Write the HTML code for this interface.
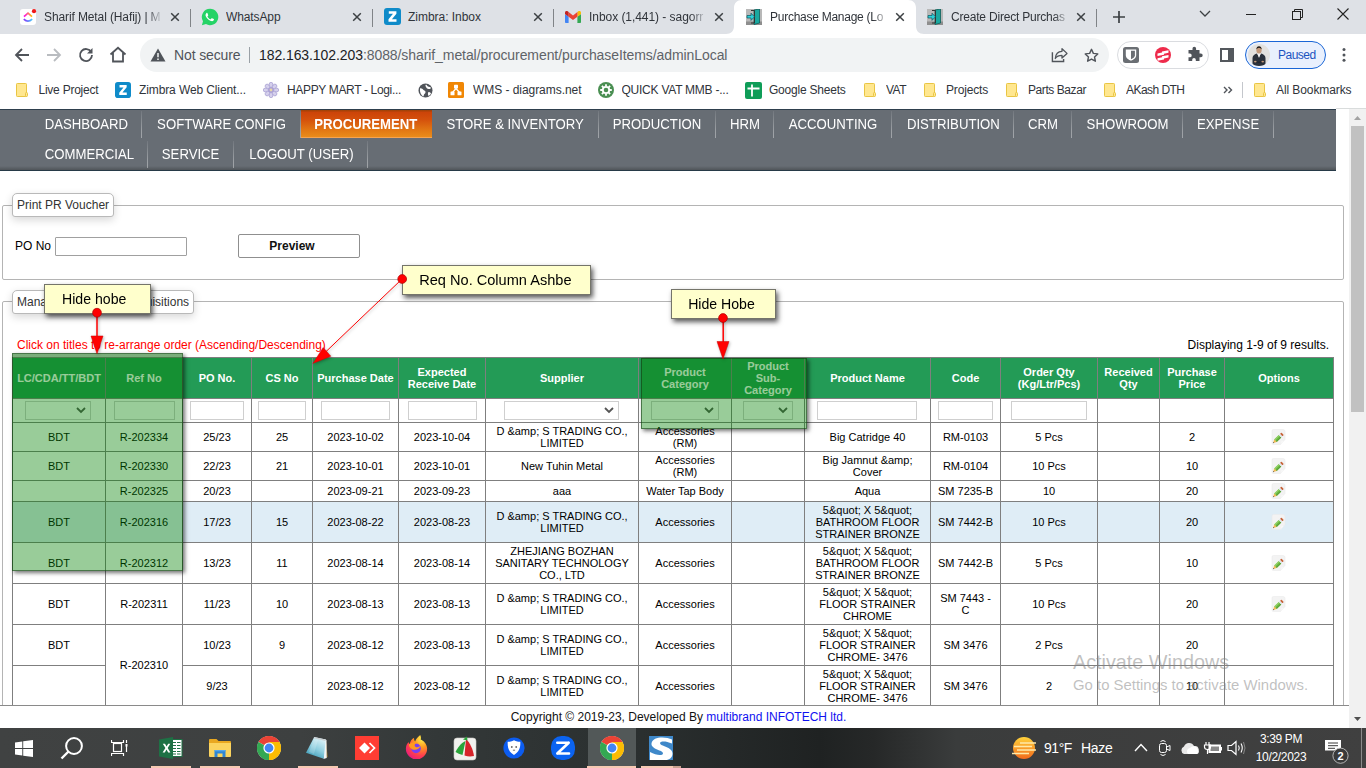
<!DOCTYPE html>
<html>
<head>
<meta charset="utf-8">
<title>Purchase Manage</title>
<style>
*{box-sizing:border-box;margin:0;padding:0}
html,body{width:1366px;height:768px;overflow:hidden;background:#fff;font-family:"Liberation Sans",sans-serif;}
body{position:relative}
.abs{position:absolute}
/* ---------- chrome ---------- */
#tabbar{position:absolute;left:0;top:0;width:1366px;height:34px;background:#dee1e6}
#toolbar{position:absolute;left:0;top:34px;width:1366px;height:41px;background:#fff}
#bookmarks{position:absolute;left:0;top:75px;width:1366px;height:33px;background:#fff}
.tab{position:absolute;top:0;height:34px;font-size:12px;color:#3c4043;white-space:nowrap}
.tab .t{position:absolute;top:10px;left:0;font-size:12.4px;color:#30343a;letter-spacing:-0.1px}
.tab .x{position:absolute;top:11px;width:10px;height:10px}
.sep{position:absolute;top:9px;width:1px;height:18px;background:#808387}
.bm{position:absolute;top:7px;font-size:12.4px;color:#30343a;white-space:nowrap;letter-spacing:-0.1px}
.folder{position:absolute;top:6px;width:12px;height:15px}
/* ---------- page ---------- */
#page{position:absolute;left:0;top:108px;width:1349px;height:620px;overflow:hidden;background:#fff}
#nav{position:absolute;left:0;top:1px;width:1336px;height:62px;background:linear-gradient(#676d74 0,#676d74 calc(100% - 4px),#50555a 100%);border-top:1px solid #2e3f4d;border-bottom:1px solid #273a48}
.mi{position:absolute;height:28px;font-size:14px;color:#fff;line-height:28px;white-space:nowrap;border-right:none;padding:0 14px;text-align:center}
.mi span{display:inline-block;transform:scaleX(.94);transform-origin:50% 50%}
.mi{padding:0 !important;overflow:visible}
.mi::after{content:"";position:absolute;right:0;top:1px;width:1px;height:27px;background:linear-gradient(rgba(255,255,255,.08),rgba(255,255,255,.34) 70%,rgba(255,255,255,.38))}
.mi.act::after{display:none}
.mi.act{background:linear-gradient(#9a4208 0,#cc4409 9%,#d4500c 35%,#e27814 75%,#e98c1a 100%);font-weight:bold;border-right:none;border-bottom:1px solid #f7a450;padding-right:2px !important}
fieldset{position:absolute;border:1px solid #b4b4b4;border-radius:2px}
.legend{position:absolute;height:24px;background:#fff;border:1px solid #b9b9b9;border-radius:5px 5px 3px 3px;font-size:12px;color:#333;line-height:22px;padding:0 4px;box-shadow:0 3px 9px rgba(0,0,0,.16);white-space:nowrap}
table{position:absolute;left:12px;top:249px;border-collapse:collapse;table-layout:fixed;width:1322px;font-size:11px;color:#000}
td,th{border:1px solid #7f7f7f;text-align:center;vertical-align:middle;padding:0;line-height:12px;overflow:hidden}
th{background:#239b56;color:#fff;font-weight:bold;font-size:11px}
tr.hl td{background:#dfedf6}
.fs{margin-right:2px}
.fi{display:inline-block;height:19px;border:1px solid #cfcfcf;background:#fff;vertical-align:middle;position:relative}
.fi svg{position:absolute;right:4px;top:5px}
.note span{display:inline-block}
.note{position:absolute;background:#ffffcc;border:1px solid #74746a;box-shadow:2px 3px 5px rgba(0,0,0,.65);font-size:15px;color:#000;text-align:center;white-space:nowrap}
.ov{position:absolute;background:rgba(0,128,0,.4);border:1px solid rgba(20,60,20,.6);box-shadow:2px 2px 4px rgba(0,0,0,.55)}
#footer{position:absolute;left:0;top:705px;width:1349px;height:23px;background:#fff;border-top:1px solid #8a8a8a;font-size:12px;line-height:23px;color:#111;text-align:center;padding-left:8px}
#footer span{color:#1010f0}
#vscroll{position:absolute;left:1349px;top:108px;width:17px;height:620px;background:#f1f1f1}
#taskbar{position:absolute;left:0;top:728px;width:1366px;height:40px;background:linear-gradient(90deg,#404242 0,#3d4040 22%,#333838 32%,#2a2f2f 47%,#1f2222 60%,#262828 64%,#3a3c3c 70%,#3c3d3d 76%,#404040 100%)}
.pn{position:relative;top:1px}
</style>
</head>
<body>
<div id="tabbar"><svg class="abs" style="left:20px;top:9px" width="17" height="16" viewBox="0 0 17 16"><defs><linearGradient id="cu1" x1="0" x2="1"><stop offset="0" stop-color="#ff02f0"/><stop offset="1" stop-color="#ffc800"/></linearGradient><linearGradient id="cu2" x1="0" x2="1"><stop offset="0" stop-color="#8930fd"/><stop offset="1" stop-color="#49ccf9"/></linearGradient></defs><rect width="16" height="16" rx="3" fill="#fff"/><path d="M4 7.6L8 4.2l4 3.4" fill="none" stroke="url(#cu1)" stroke-width="1.7"/><path d="M3.8 10.2q4.2 4 8.4 0" fill="none" stroke="url(#cu2)" stroke-width="1.7"/><circle cx="14" cy="2.2" r="2.1" fill="#f01818"/></svg><div class="abs" style="left:44px;top:9px;width:119px;height:16px;line-height:16px;font-size:12px;color:#30343a;white-space:nowrap;overflow:hidden;letter-spacing:-0.11px;-webkit-mask-image:linear-gradient(90deg,#000 calc(100% - 16px),transparent);mask-image:linear-gradient(90deg,#000 calc(100% - 16px),transparent)">Sharif Metal (Hafij) | M</div><svg class="abs" style="left:170px;top:12px" width="10" height="10" viewBox="0 0 10 10"><path d="M1.2 1.2l7.6 7.6M8.8 1.2l-7.6 7.6" stroke="#3c4043" stroke-width="1.5" fill="none"/></svg><div class="sep" style="left:190px"></div><svg class="abs" style="left:201px;top:8px" width="18" height="18" viewBox="0 0 18 18"><path d="M9 .8a8.2 8.2 0 0 0-7 12.4L.9 17.2l4.1-1.1A8.2 8.2 0 1 0 9 .8z" fill="#25d366"/><path d="M6.3 4.8c-.3 0-.7.1-1 .5-.4.5-.9 1.300-.7 2.500.3 1.600 2.400 4.300 5.400 5.200 1.300.4 2.200-.1 2.700-.8.300-.5.300-1 .2-1.100l-1.900-.9c-.2-.1-.4 0-.5.1l-.7.9c-.1.100-.3.200-.5.100-1-.4-2.300-1.500-2.800-2.600-.1-.2 0-.3.100-.4l.6-.7c.1-.1.100-.3 0-.5l-.7-1.800c-.1-.3-.2-.5-.5-.5z" fill="#fff"/></svg><div class="abs" style="left:226px;top:9px;width:100px;height:16px;line-height:16px;font-size:12px;color:#30343a;white-space:nowrap;overflow:hidden;letter-spacing:-0.11px">WhatsApp</div><svg class="abs" style="left:352px;top:12px" width="10" height="10" viewBox="0 0 10 10"><path d="M1.2 1.2l7.6 7.6M8.8 1.2l-7.6 7.6" stroke="#3c4043" stroke-width="1.5" fill="none"/></svg><div class="sep" style="left:372px"></div><svg class="abs" style="left:384px;top:8px" width="17" height="17" viewBox="0 0 17 17"><rect width="17" height="17" rx="3" fill="#0f8bc9"/><path d="M4.800 3.300h7.600v2.400L7.900 11.200h4.600v2.500H4.500v-2.400l4.500-5.500H4.800z" fill="#fff"/></svg><div class="abs" style="left:408px;top:9px;width:100px;height:16px;line-height:16px;font-size:12px;color:#30343a;white-space:nowrap;overflow:hidden;letter-spacing:-0.03px">Zimbra: Inbox</div><svg class="abs" style="left:533px;top:12px" width="10" height="10" viewBox="0 0 10 10"><path d="M1.2 1.2l7.6 7.6M8.8 1.2l-7.6 7.6" stroke="#3c4043" stroke-width="1.5" fill="none"/></svg><div class="sep" style="left:553px"></div><svg class="abs" style="left:565px;top:11px" width="16" height="12" viewBox="0 0 16 12"><path d="M0 1.500v9.400c0 .6.500 1.100 1.100 1.100h2.500V5.800L0 3z" fill="#4285f4"/><path d="M12.400 12h2.500c.6 0 1.100-.5 1.100-1.100V3l-3.600 2.800z" fill="#34a853"/><path d="M12.400 1.100v4.700L16 3V1.600C16 .2 14.500-.5 13.400.3z" fill="#fbbc04"/><path d="M3.600 5.800V1.100L8 4.400l4.400-3.300v4.700L8 9.100z" fill="#ea4335"/><path d="M0 1.600V3l3.600 2.800V1.100L2.600.3C1.500-.5 0 .2 0 1.600z" fill="#c5221f"/></svg><div class="abs" style="left:589px;top:9px;width:118px;height:16px;line-height:16px;font-size:12px;color:#30343a;white-space:nowrap;overflow:hidden;letter-spacing:-0.05px;-webkit-mask-image:linear-gradient(90deg,#000 calc(100% - 16px),transparent);mask-image:linear-gradient(90deg,#000 calc(100% - 16px),transparent)">Inbox (1,441) - sagorr</div><svg class="abs" style="left:714px;top:12px" width="10" height="10" viewBox="0 0 10 10"><path d="M1.2 1.2l7.6 7.6M8.8 1.2l-7.6 7.6" stroke="#3c4043" stroke-width="1.5" fill="none"/></svg><svg class="abs" style="left:726px;top:0" width="198" height="34" viewBox="0 0 198 34"><path d="M0 34c5 0 8-3 8-8V8c0-5 3-8 8-8h166c5 0 8 3 8 8v18c0 5 3 8 8 8z" fill="#fff"/></svg><svg class="abs" style="left:746px;top:9px" width="16" height="16" viewBox="0 0 16 16"><rect width="16" height="16" fill="#b8b8b8"/><rect x="0" y="12.500" width="16" height="3.500" fill="#8e8e8e"/><path d="M8 1l5.500-1v14L8 15.500z" fill="#1aa8a0" stroke="#0c5f5a" stroke-width=".8"/><path d="M5 1.500h3.500v12.500H5" fill="none" stroke="#333" stroke-width="1"/><path d="M1 6.500h4V4.200l3.500 3.600L5 11.400V9H1z" fill="#2fd0d8" stroke="#0a5560" stroke-width=".7"/></svg><div class="abs" style="left:770px;top:9px;width:119px;height:16px;line-height:16px;font-size:12px;color:#30343a;white-space:nowrap;overflow:hidden;letter-spacing:-0.26px;-webkit-mask-image:linear-gradient(90deg,#000 calc(100% - 16px),transparent);mask-image:linear-gradient(90deg,#000 calc(100% - 16px),transparent)">Purchase Manage (Lo</div><svg class="abs" style="left:895px;top:12px" width="10" height="10" viewBox="0 0 10 10"><path d="M1.2 1.2l7.6 7.6M8.8 1.2l-7.6 7.6" stroke="#3c4043" stroke-width="1.5" fill="none"/></svg><svg class="abs" style="left:927px;top:9px" width="16" height="16" viewBox="0 0 16 16"><rect width="16" height="16" fill="#b8b8b8"/><rect x="0" y="12.500" width="16" height="3.500" fill="#8e8e8e"/><path d="M8 1l5.500-1v14L8 15.500z" fill="#1aa8a0" stroke="#0c5f5a" stroke-width=".8"/><path d="M5 1.500h3.500v12.500H5" fill="none" stroke="#333" stroke-width="1"/><path d="M1 6.500h4V4.200l3.500 3.600L5 11.400V9H1z" fill="#2fd0d8" stroke="#0a5560" stroke-width=".7"/></svg><div class="abs" style="left:951px;top:9px;width:119px;height:16px;line-height:16px;font-size:12px;color:#30343a;white-space:nowrap;overflow:hidden;letter-spacing:-0.2px;-webkit-mask-image:linear-gradient(90deg,#000 calc(100% - 16px),transparent);mask-image:linear-gradient(90deg,#000 calc(100% - 16px),transparent)">Create Direct Purchas</div><svg class="abs" style="left:1076px;top:12px" width="10" height="10" viewBox="0 0 10 10"><path d="M1.2 1.2l7.6 7.6M8.8 1.2l-7.6 7.6" stroke="#3c4043" stroke-width="1.5" fill="none"/></svg><div class="sep" style="left:1096px"></div><svg class="abs" style="left:1112px;top:10px" width="14" height="14" viewBox="0 0 14 14"><path d="M7 1v12M1 7h12" stroke="#3c4043" stroke-width="1.700" fill="none"/></svg><svg class="abs" style="left:1199px;top:10px" width="12" height="8" viewBox="0 0 12 8"><path d="M1 1l5 5 5-5" stroke="#3c4043" stroke-width="1.300" fill="none"/></svg><div class="abs" style="left:1246px;top:14px;width:10px;height:1px;background:#222"></div><svg class="abs" style="left:1292px;top:9px" width="11" height="11" viewBox="0 0 11 11"><path d="M2.500 2.500V.5h8v8h-2" fill="none" stroke="#222" stroke-width="1"/><rect x=".5" y="2.500" width="8" height="8" fill="none" stroke="#222" stroke-width="1"/></svg><svg class="abs" style="left:1337px;top:8px" width="12" height="12" viewBox="0 0 12 12"><path d="M.5.5l11 11M11.500.5l-11 11" stroke="#222" stroke-width="1.100" fill="none"/></svg></div>
<div id="toolbar"><svg class="abs" style="left:14px;top:13px" width="16" height="16" viewBox="0 0 16 16"><path d="M15 8H2.500M8 2L2 8l6 6" fill="none" stroke="#50545a" stroke-width="1.800"/></svg><svg class="abs" style="left:46px;top:13px" width="16" height="16" viewBox="0 0 16 16"><path d="M1 8h12.500M8 2l6 6-6 6" fill="none" stroke="#b9bcc0" stroke-width="1.800"/></svg><svg class="abs" style="left:78px;top:13px" width="16" height="16" viewBox="0 0 16 16"><path d="M13.300 5.200A6 6 0 1 0 14 8" fill="none" stroke="#50545a" stroke-width="1.800"/><path d="M14.500 1v5.500H9z" fill="#50545a"/></svg><svg class="abs" style="left:109px;top:12px" width="18" height="17" viewBox="0 0 18 17"><path d="M1.500 8.500L9 1.800l7.500 6.700M4 7v8.500h10V7" fill="none" stroke="#50545a" stroke-width="1.800"/></svg><div class="abs" style="left:140px;top:4px;width:969px;height:34px;border-radius:17px;background:#f1f3f4"></div><svg class="abs" style="left:150px;top:14px" width="16" height="14" viewBox="0 0 16 14"><path d="M8 .5L15.500 13.500H.5z" fill="#50545a"/><path d="M8 5v4.200M8 10.500v1.600" stroke="#f1f3f4" stroke-width="1.500"/></svg><div class="abs" style="left:174px;top:12px;width:70px;height:18px;line-height:18px;font-size:14px;color:#50545a;white-space:nowrap;overflow:hidden;letter-spacing:-0.12px">Not secure</div><div class="abs" style="left:249px;top:13px;width:1px;height:16px;background:#9aa0a6"></div><div class="abs" style="left:259px;top:12px;height:18px;line-height:18px;font-size:14px;color:#5f6368;white-space:nowrap;letter-spacing:-0.08px"><span style="color:#202124">182.163.102.203</span>:8088/sharif_metal/procurement/purchaseItems/adminLocal</div><svg class="abs" style="left:1051px;top:12px" width="18" height="17" viewBox="0 0 18 17"><path d="M1.400 6.200V15.500H12.600V13" fill="none" stroke="#50545a" stroke-width="1.400"/><path d="M11 2.700L16 7.400 11 12V9.400C8 9.400 5.600 10.500 4.300 12.500 4.600 8.500 7 5.400 11 5.300z" fill="none" stroke="#50545a" stroke-width="1.300" stroke-linejoin="round"/></svg><svg class="abs" style="left:1084px;top:14px" width="15" height="15" viewBox="0 0 17 17"><path d="M8.500 1.500l2.100 4.600 5 .6-3.700 3.400 1 4.900-4.400-2.500L4.100 15l1-4.900L1.400 6.700l5-.6z" fill="none" stroke="#50545a" stroke-width="1.600" stroke-linejoin="round"/></svg><div class="abs" style="left:1117px;top:7px;width:92px;height:28px;border-radius:14px;background:#fff;border:1px solid #dadce0"></div><svg class="abs" style="left:1123px;top:13px" width="16" height="16" viewBox="0 0 16 16"><rect width="16" height="16" rx="2.500" fill="#6a6e73"/><path d="M2.800 2.500h10.400v5.800c0 2.800-2.800 4.600-5.200 5.500-2.400-.9-5.200-2.700-5.200-5.500z" fill="#fff"/><path d="M8 3.800h3.900v4.500c0 1.800-2 3.300-3.900 4z" fill="#6a6e73"/></svg><svg class="abs" style="left:1155px;top:13px" width="16" height="16" viewBox="0 0 16 16"><circle cx="8" cy="8" r="8" fill="#ee2b4b"/><path d="M2.500 6.500l4.500-1v-1l6.500-1.200v2.400l-4.500 1v1l-6.500 1.200zM2.500 11.300l4.500-1v-1l6.500-1.200v2.400l-4.500 1v1l-6.500 1.200z" fill="#fff"/></svg><svg class="abs" style="left:1186px;top:12px" width="17" height="17" viewBox="0 0 17 17"><path d="M6.500 2.500a1.800 1.800 0 0 1 3.600 0V4h3.400v3.400h1.300a1.900 1.900 0 0 1 0 3.800h-1.300V15H9.800v-1.300a1.800 1.800 0 0 0-3.600 0V15H2.500v-3.700h1.300a1.900 1.900 0 0 0 0-3.800H2.500V4h4z" fill="#50545a"/></svg><div class="abs" style="left:1220px;top:14px;width:14px;height:14px;border:2px solid #54585d;border-right-width:6px"></div><div class="abs" style="left:1245px;top:7px;width:81px;height:28px;border-radius:14px;background:#e9f0fd;border:1.500px solid #1a66d6"></div><svg class="abs" style="left:1248px;top:10px" width="22" height="22" viewBox="0 0 22 22"><defs><clipPath id="av"><circle cx="11" cy="11" r="11"/></clipPath></defs><g clip-path="url(#av)"><rect width="22" height="22" fill="#e3e1de"/><path d="M4.500 22v-8c0-2.500 2.500-4 4.500-4.500L11 13l2-3.500c2 .5 4.500 2 4.500 4.500v8z" fill="#2b313b"/><path d="M9.300 9.500L11 14l1.700-4.500z" fill="#f4f4f4"/><ellipse cx="11" cy="6.200" rx="2.600" ry="3.200" fill="#c49a7c"/><path d="M8.300 5.600q.3-3.300 2.700-3.300t2.700 3.300q-1-1.800-2.700-1.800t-2.700 1.800z" fill="#1e1a18"/><path d="M6.500 16.500q4.500 2 9 0v1.800q-4.500 1.500-9 0z" fill="#232830"/><ellipse cx="7.300" cy="17.600" rx="1.300" ry=".9" fill="#c49a7c"/><ellipse cx="14.700" cy="17.600" rx="1.300" ry=".9" fill="#c49a7c"/></g></svg><div class="abs" style="left:1278px;top:12px;width:45px;height:18px;line-height:18px;font-size:12.5px;color:#1a53c0;white-space:nowrap;overflow:hidden;letter-spacing:-0.5px;font-size:12px">Paused</div><svg class="abs" style="left:1342px;top:12px" width="4" height="18" viewBox="0 0 4 18"><circle cx="2" cy="3.600" r="1.500" fill="#50545a"/><circle cx="2" cy="8.900" r="1.500" fill="#50545a"/><circle cx="2" cy="14.200" r="1.500" fill="#50545a"/></svg></div>
<div id="bookmarks"><svg class="abs" style="left:16px;top:8px" width="13" height="15" viewBox="0 0 13 15"><rect x=".5" y=".5" width="10" height="13" rx=".8" fill="#ffe790" stroke="#e9c543"/><rect x="9.500" y="9.500" width="2" height="4" rx="1" fill="#ffe790" stroke="#e9c543"/></svg><div class="abs" style="left:38.5px;top:6px;width:70px;height:18px;line-height:18px;font-size:12px;color:#30343a;white-space:nowrap;overflow:hidden;letter-spacing:-0.24px">Live Project</div><svg class="abs" style="left:115px;top:7px" width="16" height="16" viewBox="0 0 17 17"><rect width="17" height="17" rx="3" fill="#0f8bc9"/><path d="M4.800 3.300h7.600v2.400L7.900 11.200h4.600v2.500H4.500v-2.400l4.500-5.500H4.800z" fill="#fff"/></svg><div class="abs" style="left:139px;top:6px;width:112px;height:18px;line-height:18px;font-size:12px;color:#30343a;white-space:nowrap;overflow:hidden;letter-spacing:-0.11px">Zimbra Web Client...</div><svg class="abs" style="left:263px;top:7px" width="16" height="16" viewBox="0 0 16 16"><g fill="#d5d0ec" stroke="#a39bd0" stroke-width=".7"><ellipse cx="8" cy="3" rx="2" ry="2.800"/><ellipse cx="8" cy="13" rx="2" ry="2.800"/><ellipse cx="3" cy="8" rx="2.800" ry="2"/><ellipse cx="13" cy="8" rx="2.800" ry="2"/><ellipse cx="4.500" cy="4.500" rx="2" ry="2.600" transform="rotate(-45 4.500 4.500)"/><ellipse cx="11.500" cy="4.500" rx="2" ry="2.600" transform="rotate(45 11.500 4.500)"/><ellipse cx="4.500" cy="11.500" rx="2" ry="2.600" transform="rotate(45 4.500 11.500)"/><ellipse cx="11.500" cy="11.500" rx="2" ry="2.600" transform="rotate(-45 11.500 11.500)"/></g><circle cx="8" cy="8" r="2.800" fill="#aaa0d6"/><circle cx="8" cy="8" r="1.400" fill="#e6d8a8"/></svg><div class="abs" style="left:287px;top:6px;width:120px;height:18px;line-height:18px;font-size:12px;color:#30343a;white-space:nowrap;overflow:hidden;letter-spacing:-0.34px">HAPPY MART - Logi...</div><svg class="abs" style="left:418px;top:8px" width="15" height="15" viewBox="0 0 15 15"><circle cx="7.500" cy="7.500" r="7" fill="#50545a"/><path d="M2 5.500c1.500-.5 2.500.5 3.500 1.500s2 .5 2 2-1 1.500-1.500 2.500 0 2-1 2C3 12 1.500 9 2 5.500zM8 1.500c1 .5 1 1.500 2 2s2.500 0 3 1.500c-.5 1-1.500 1-2.500 1S8.500 5 8 4s-1-1.500 0-2.500zM10.500 9c1 0 2 .5 2.500 1.500-.5 1-1.500 2-2.500 2.500-.5-1-1-3 0-4z" fill="#fff"/></svg><svg class="abs" style="left:448px;top:7px" width="16" height="16" viewBox="0 0 16 16"><rect width="16" height="16" rx="1.500" fill="#f08705"/><path d="M8 6.500L4.500 10.500M8 6.500l3.500 4" stroke="#fff" stroke-width="1.200"/><rect x="6" y="2.800" width="4" height="3.800" rx=".6" fill="#fff"/><rect x="2.500" y="9.500" width="4" height="3.800" rx=".6" fill="#fff"/><rect x="9.500" y="9.500" width="4" height="3.800" rx=".6" fill="#fff"/></svg><div class="abs" style="left:473px;top:6px;width:112px;height:18px;line-height:18px;font-size:12px;color:#30343a;white-space:nowrap;overflow:hidden;letter-spacing:-0.05px">WMS - diagrams.net</div><svg class="abs" style="left:598px;top:7px" width="16" height="16" viewBox="0 0 16 16"><circle cx="8" cy="8" r="8" fill="#4a8f52"/><circle cx="8" cy="8" r="3.200" fill="none" stroke="#fff" stroke-width="1.800"/><g stroke="#fff" stroke-width="1.800"><path d="M8 2.200v2M8 11.800v2M2.200 8h2M11.800 8h2M3.900 3.900l1.400 1.400M10.700 10.700l1.400 1.400M3.900 12.100l1.400-1.400M10.700 5.300l1.400-1.400"/></g></svg><div class="abs" style="left:621.5px;top:6px;width:110px;height:18px;line-height:18px;font-size:12px;color:#30343a;white-space:nowrap;overflow:hidden;letter-spacing:-0.24px">QUICK VAT MMB -...</div><svg class="abs" style="left:745px;top:7px" width="17" height="17" viewBox="0 0 17 17"><rect width="17" height="17" rx="2" fill="#0f9d58"/><path d="M2.500 6.500h12M7 2.500v12" stroke="#fff" stroke-width="1.800"/></svg><div class="abs" style="left:769px;top:6px;width:80px;height:18px;line-height:18px;font-size:12px;color:#30343a;white-space:nowrap;overflow:hidden;letter-spacing:-0.22px">Google Sheets</div><svg class="abs" style="left:864px;top:8px" width="13" height="15" viewBox="0 0 13 15"><rect x=".5" y=".5" width="10" height="13" rx=".8" fill="#ffe790" stroke="#e9c543"/><rect x="9.500" y="9.500" width="2" height="4" rx="1" fill="#ffe790" stroke="#e9c543"/></svg><div class="abs" style="left:886px;top:6px;width:24px;height:18px;line-height:18px;font-size:12px;color:#30343a;white-space:nowrap;overflow:hidden;letter-spacing:-0.5px">VAT</div><svg class="abs" style="left:924px;top:8px" width="13" height="15" viewBox="0 0 13 15"><rect x=".5" y=".5" width="10" height="13" rx=".8" fill="#ffe790" stroke="#e9c543"/><rect x="9.500" y="9.500" width="2" height="4" rx="1" fill="#ffe790" stroke="#e9c543"/></svg><div class="abs" style="left:946px;top:6px;width:46px;height:18px;line-height:18px;font-size:12px;color:#30343a;white-space:nowrap;overflow:hidden;letter-spacing:-0.17px">Projects</div><svg class="abs" style="left:1006px;top:8px" width="13" height="15" viewBox="0 0 13 15"><rect x=".5" y=".5" width="10" height="13" rx=".8" fill="#ffe790" stroke="#e9c543"/><rect x="9.500" y="9.500" width="2" height="4" rx="1" fill="#ffe790" stroke="#e9c543"/></svg><div class="abs" style="left:1028px;top:6px;width:62px;height:18px;line-height:18px;font-size:12px;color:#30343a;white-space:nowrap;overflow:hidden;letter-spacing:-0.43px">Parts Bazar</div><svg class="abs" style="left:1104px;top:8px" width="13" height="15" viewBox="0 0 13 15"><rect x=".5" y=".5" width="10" height="13" rx=".8" fill="#ffe790" stroke="#e9c543"/><rect x="9.500" y="9.500" width="2" height="4" rx="1" fill="#ffe790" stroke="#e9c543"/></svg><div class="abs" style="left:1126px;top:6px;width:62px;height:18px;line-height:18px;font-size:12px;color:#30343a;white-space:nowrap;overflow:hidden;letter-spacing:-0.54px">AKash DTH</div><svg class="abs" style="left:1223px;top:11px" width="10" height="8" viewBox="0 0 10 8"><path d="M1 1l3 3-3 3M5.500 1l3 3-3 3" fill="none" stroke="#50545a" stroke-width="1.400"/></svg><div class="abs" style="left:1242px;top:7px;width:1px;height:16px;background:#c4c7cc"></div><svg class="abs" style="left:1254px;top:8px" width="13" height="15" viewBox="0 0 13 15"><rect x=".5" y=".5" width="10" height="13" rx=".8" fill="#ffe790" stroke="#e9c543"/><rect x="9.500" y="9.500" width="2" height="4" rx="1" fill="#ffe790" stroke="#e9c543"/></svg><div class="abs" style="left:1276px;top:6px;width:80px;height:18px;line-height:18px;font-size:12px;color:#30343a;white-space:nowrap;overflow:hidden;letter-spacing:-0.09px">All Bookmarks</div></div>
<div id="page">
 <div id="nav">
<div class="mi" style="left:31px;top:0px;width:111px"><span>DASHBOARD</span></div>
<div class="mi" style="left:142px;top:0px;width:159px"><span>SOFTWARE CONFIG</span></div>
<div class="mi act" style="left:301px;top:0px;width:131px"><span>PROCUREMENT</span></div>
<div class="mi" style="left:432px;top:0px;width:167px"><span>STORE &amp; INVENTORY</span></div>
<div class="mi" style="left:599px;top:0px;width:117px"><span>PRODUCTION</span></div>
<div class="mi" style="left:716px;top:0px;width:58px"><span>HRM</span></div>
<div class="mi" style="left:774px;top:0px;width:118px"><span>ACCOUNTING</span></div>
<div class="mi" style="left:892px;top:0px;width:122px"><span>DISTRIBUTION</span></div>
<div class="mi" style="left:1014px;top:0px;width:58px"><span>CRM</span></div>
<div class="mi" style="left:1072px;top:0px;width:111px"><span>SHOWROOM</span></div>
<div class="mi" style="left:1183px;top:0px;width:91px"><span>EXPENSE</span></div>
<div class="mi" style="left:31px;top:30px;width:117px"><span>COMMERCIAL</span></div>
<div class="mi" style="left:148px;top:30px;width:86px"><span>SERVICE</span></div>
<div class="mi" style="left:234px;top:30px;width:134px"><span>LOGOUT (USER)</span></div>
</div>
 <fieldset style="left:2px;top:97px;width:1342px;height:75px"></fieldset>
 <div class="legend" style="left:12px;top:85px;width:102px">Print PR Voucher</div>
 <div class="abs" style="left:15px;top:131px;font-size:12px;color:#000">PO No</div>
 <div class="abs" style="left:55px;top:129px;width:132px;height:19px;border:1px solid #a0a0a0;border-radius:1px;background:#fff"></div>
 <div class="abs" style="left:238px;top:126px;width:122px;height:24px;border:1px solid #8f8f8f;border-radius:2px;background:#fff;font-size:12px;font-weight:bold;text-align:center;line-height:22px;color:#111;padding-right:14px">Preview</div>
 <fieldset style="left:2px;top:193px;width:1342px;height:500px"></fieldset>
 <div class="legend" style="left:12px;top:182px;width:182px">Manage Purchase <span style="margin-left:6px">Requisitions</span></div>
 <div class="abs" style="left:17px;top:230px;font-size:12px;color:#f00;white-space:nowrap">Click on titles to re-arrange order (Ascending/Descending)</div>
 <div class="abs" style="left:1100px;top:230px;width:1229px;font-size:12px;color:#000;white-space:nowrap;text-align:right;width:229px">Displaying 1-9 of 9 results.</div>
<table>
<colgroup><col style="width:93px"><col style="width:77px"><col style="width:69px"><col style="width:61px"><col style="width:86px"><col style="width:87px"><col style="width:153px"><col style="width:93px"><col style="width:73px"><col style="width:126px"><col style="width:70px"><col style="width:97px"><col style="width:62px"><col style="width:65px"><col style="width:109px"></colgroup>
<tr style="height:41px"><th>LC/CDA/TT/BDT</th><th>Ref No</th><th>PO No.</th><th>CS No</th><th>Purchase Date</th><th>Expected<br>Receive Date</th><th>Supplier</th><th>Product<br>Category</th><th>Product<br>Sub-<br>Category</th><th>Product Name</th><th>Code</th><th>Order Qty<br>(Kg/Ltr/Pcs)</th><th>Received<br>Qty</th><th>Purchase<br>Price</th><th>Options</th></tr>
<tr style="height:24px"><td><span class="fi fs" style="width:66px"><svg width="10" height="7" viewBox="0 0 10 7"><path d="M1 1l4 4 4-4" fill="none" stroke="#555" stroke-width="1.8"/></svg></span></td><td><span class="fi" style="width:61px"></span></td><td><span class="fi" style="width:54px;margin-right:1px"></span></td><td><span class="fi" style="width:48px"></span></td><td><span class="fi" style="width:69px"></span></td><td><span class="fi" style="width:69px"></span></td><td><span class="fi fs" style="width:115px"><svg width="10" height="7" viewBox="0 0 10 7"><path d="M1 1l4 4 4-4" fill="none" stroke="#555" stroke-width="1.8"/></svg></span></td><td><span class="fi" style="width:68px"><svg width="10" height="7" viewBox="0 0 10 7"><path d="M1 1l4 4 4-4" fill="none" stroke="#555" stroke-width="1.8"/></svg></span></td><td><span class="fi" style="width:50px"><svg width="10" height="7" viewBox="0 0 10 7"><path d="M1 1l4 4 4-4" fill="none" stroke="#555" stroke-width="1.8"/></svg></span></td><td><span class="fi fs" style="width:100px"></span></td><td><span class="fi" style="width:55px"></span></td><td><span class="fi" style="width:76px"></span></td><td></td><td></td><td></td></tr>
<tr style="height:29px"><td>BDT</td><td>R-202334</td><td>25/23</td><td>25</td><td>2023-10-02</td><td>2023-10-04</td><td>D &amp;amp; S TRADING CO.,<br>LIMITED</td><td>Accessories<br>(RM)</td><td></td><td>Big Catridge 40</td><td>RM-0103</td><td>5 Pcs</td><td></td><td>2</td><td><svg class="pn" width="16" height="16" viewBox="0 0 16 16"><path d="M2.500 0.500h9.500q2 0 2 2v8l-4.500 5h-7q-1.500 0-1.500-1.500v-12q0-1.500 1.500-1.500z" fill="#f3f3f3" stroke="#ebebeb" stroke-width=".6"/><path d="M14 10.500l-4.500 5q1.500-.5 1-3 2.500.5 3.500-2z" fill="#fdfdfd"/><g transform="translate(.3 .6) rotate(-45 8 8) scale(.93)" opacity=".92"><rect x="3.200" y="6.200" width="7" height="3.800" fill="#63b534"/><rect x="3.200" y="6.200" width="7" height="1.300" fill="#8ed160"/><rect x="3.200" y="8.900" width="7" height="1.100" fill="#4a9c26"/><rect x="10.200" y="6.200" width="1.900" height="3.800" fill="#dde4ea"/><rect x="12.100" y="6.200" width="2" height="3.800" rx=".8" fill="#c4572a"/><path d="M3.200 6.200L-0.200 8.100l3.400 1.900z" fill="#f5b544"/><path d="M0.900 7.450L-0.500 8.100l1.400.65z" fill="#333"/></g></svg></td></tr>
<tr style="height:29px"><td>BDT</td><td>R-202330</td><td>22/23</td><td>21</td><td>2023-10-01</td><td>2023-10-01</td><td>New Tuhin Metal</td><td>Accessories<br>(RM)</td><td></td><td>Big Jamnut &amp;amp;<br>Cover</td><td>RM-0104</td><td>10 Pcs</td><td></td><td>10</td><td><svg class="pn" width="16" height="16" viewBox="0 0 16 16"><path d="M2.500 0.500h9.500q2 0 2 2v8l-4.500 5h-7q-1.500 0-1.500-1.500v-12q0-1.500 1.500-1.500z" fill="#f3f3f3" stroke="#ebebeb" stroke-width=".6"/><path d="M14 10.500l-4.500 5q1.500-.5 1-3 2.500.5 3.500-2z" fill="#fdfdfd"/><g transform="translate(.3 .6) rotate(-45 8 8) scale(.93)" opacity=".92"><rect x="3.200" y="6.200" width="7" height="3.800" fill="#63b534"/><rect x="3.200" y="6.200" width="7" height="1.300" fill="#8ed160"/><rect x="3.200" y="8.900" width="7" height="1.100" fill="#4a9c26"/><rect x="10.200" y="6.200" width="1.900" height="3.800" fill="#dde4ea"/><rect x="12.100" y="6.200" width="2" height="3.800" rx=".8" fill="#c4572a"/><path d="M3.200 6.200L-0.200 8.100l3.400 1.900z" fill="#f5b544"/><path d="M0.900 7.450L-0.500 8.100l1.400.65z" fill="#333"/></g></svg></td></tr>
<tr style="height:21px"><td></td><td>R-202325</td><td>20/23</td><td></td><td>2023-09-21</td><td>2023-09-23</td><td>aaa</td><td>Water Tap Body</td><td></td><td>Aqua</td><td>SM 7235-B</td><td>10</td><td></td><td>20</td><td><svg class="pn" width="16" height="16" viewBox="0 0 16 16"><path d="M2.500 0.500h9.500q2 0 2 2v8l-4.500 5h-7q-1.500 0-1.500-1.500v-12q0-1.500 1.500-1.500z" fill="#f3f3f3" stroke="#ebebeb" stroke-width=".6"/><path d="M14 10.500l-4.500 5q1.500-.5 1-3 2.500.5 3.500-2z" fill="#fdfdfd"/><g transform="translate(.3 .6) rotate(-45 8 8) scale(.93)" opacity=".92"><rect x="3.200" y="6.200" width="7" height="3.800" fill="#63b534"/><rect x="3.200" y="6.200" width="7" height="1.300" fill="#8ed160"/><rect x="3.200" y="8.900" width="7" height="1.100" fill="#4a9c26"/><rect x="10.200" y="6.200" width="1.900" height="3.800" fill="#dde4ea"/><rect x="12.100" y="6.200" width="2" height="3.800" rx=".8" fill="#c4572a"/><path d="M3.200 6.200L-0.200 8.100l3.400 1.900z" fill="#f5b544"/><path d="M0.900 7.450L-0.500 8.100l1.400.65z" fill="#333"/></g></svg></td></tr>
<tr style="height:41px" class="hl"><td>BDT</td><td>R-202316</td><td>17/23</td><td>15</td><td>2023-08-22</td><td>2023-08-23</td><td>D &amp;amp; S TRADING CO.,<br>LIMITED</td><td>Accessories</td><td></td><td>5&amp;quot; X 5&amp;quot;<br>BATHROOM FLOOR<br>STRAINER BRONZE</td><td>SM 7442-B</td><td>10 Pcs</td><td></td><td>20</td><td><svg class="pn" width="16" height="16" viewBox="0 0 16 16"><path d="M2.500 0.500h9.500q2 0 2 2v8l-4.500 5h-7q-1.500 0-1.500-1.500v-12q0-1.500 1.500-1.500z" fill="#f3f3f3" stroke="#ebebeb" stroke-width=".6"/><path d="M14 10.500l-4.500 5q1.500-.5 1-3 2.500.5 3.500-2z" fill="#fdfdfd"/><g transform="translate(.3 .6) rotate(-45 8 8) scale(.93)" opacity=".92"><rect x="3.200" y="6.200" width="7" height="3.800" fill="#63b534"/><rect x="3.200" y="6.200" width="7" height="1.300" fill="#8ed160"/><rect x="3.200" y="8.900" width="7" height="1.100" fill="#4a9c26"/><rect x="10.200" y="6.200" width="1.900" height="3.800" fill="#dde4ea"/><rect x="12.100" y="6.200" width="2" height="3.800" rx=".8" fill="#c4572a"/><path d="M3.200 6.200L-0.200 8.100l3.400 1.900z" fill="#f5b544"/><path d="M0.900 7.450L-0.500 8.100l1.400.65z" fill="#333"/></g></svg></td></tr>
<tr style="height:41px"><td>BDT</td><td>R-202312</td><td>13/23</td><td>11</td><td>2023-08-14</td><td>2023-08-14</td><td>ZHEJIANG BOZHAN<br>SANITARY TECHNOLOGY<br>CO., LTD</td><td>Accessories</td><td></td><td>5&amp;quot; X 5&amp;quot;<br>BATHROOM FLOOR<br>STRAINER BRONZE</td><td>SM 7442-B</td><td>5 Pcs</td><td></td><td>10</td><td><svg class="pn" width="16" height="16" viewBox="0 0 16 16"><path d="M2.500 0.500h9.500q2 0 2 2v8l-4.500 5h-7q-1.500 0-1.500-1.500v-12q0-1.500 1.500-1.500z" fill="#f3f3f3" stroke="#ebebeb" stroke-width=".6"/><path d="M14 10.500l-4.500 5q1.500-.5 1-3 2.500.5 3.500-2z" fill="#fdfdfd"/><g transform="translate(.3 .6) rotate(-45 8 8) scale(.93)" opacity=".92"><rect x="3.200" y="6.200" width="7" height="3.800" fill="#63b534"/><rect x="3.200" y="6.200" width="7" height="1.300" fill="#8ed160"/><rect x="3.200" y="8.900" width="7" height="1.100" fill="#4a9c26"/><rect x="10.200" y="6.200" width="1.900" height="3.800" fill="#dde4ea"/><rect x="12.100" y="6.200" width="2" height="3.800" rx=".8" fill="#c4572a"/><path d="M3.200 6.200L-0.200 8.100l3.400 1.900z" fill="#f5b544"/><path d="M0.900 7.450L-0.500 8.100l1.400.65z" fill="#333"/></g></svg></td></tr>
<tr style="height:41px"><td>BDT</td><td>R-202311</td><td>11/23</td><td>10</td><td>2023-08-13</td><td>2023-08-13</td><td>D &amp;amp; S TRADING CO.,<br>LIMITED</td><td>Accessories</td><td></td><td>5&amp;quot; X 5&amp;quot;<br>FLOOR STRAINER<br>CHROME</td><td>SM 7443 -<br>C</td><td>10 Pcs</td><td></td><td>20</td><td><svg class="pn" width="16" height="16" viewBox="0 0 16 16"><path d="M2.500 0.500h9.500q2 0 2 2v8l-4.500 5h-7q-1.500 0-1.500-1.500v-12q0-1.500 1.500-1.500z" fill="#f3f3f3" stroke="#ebebeb" stroke-width=".6"/><path d="M14 10.500l-4.500 5q1.500-.5 1-3 2.500.5 3.500-2z" fill="#fdfdfd"/><g transform="translate(.3 .6) rotate(-45 8 8) scale(.93)" opacity=".92"><rect x="3.200" y="6.200" width="7" height="3.800" fill="#63b534"/><rect x="3.200" y="6.200" width="7" height="1.300" fill="#8ed160"/><rect x="3.200" y="8.900" width="7" height="1.100" fill="#4a9c26"/><rect x="10.200" y="6.200" width="1.900" height="3.800" fill="#dde4ea"/><rect x="12.100" y="6.200" width="2" height="3.800" rx=".8" fill="#c4572a"/><path d="M3.200 6.200L-0.200 8.100l3.400 1.900z" fill="#f5b544"/><path d="M0.900 7.450L-0.500 8.100l1.400.65z" fill="#333"/></g></svg></td></tr>
<tr style="height:41px"><td>BDT</td><td rowspan="2" style="padding-bottom:2px">R-202310</td><td>10/23</td><td>9</td><td>2023-08-12</td><td>2023-08-13</td><td>D &amp;amp; S TRADING CO.,<br>LIMITED</td><td>Accessories</td><td></td><td>5&amp;quot; X 5&amp;quot;<br>FLOOR STRAINER<br>CHROME- 3476</td><td>SM 3476</td><td>2 Pcs</td><td></td><td>20</td><td></td></tr>
<tr style="height:41px"><td></td><td>9/23</td><td></td><td>2023-08-12</td><td>2023-08-12</td><td>D &amp;amp; S TRADING CO.,<br>LIMITED</td><td>Accessories</td><td></td><td>5&amp;quot; X 5&amp;quot;<br>FLOOR STRAINER<br>CHROME- 3476</td><td>SM 3476</td><td>2</td><td></td><td>10</td><td></td></tr>
</table>
</div>

<div class="ov" style="left:12px;top:353px;width:171px;height:218px;background:linear-gradient(rgba(0,50,0,.2),rgba(0,50,0,.2)) top/100% 3px no-repeat,rgba(0,128,0,.4)"></div>
<div class="ov" style="left:641px;top:358px;width:166px;height:71px"></div>
<svg class="abs" style="left:0;top:0;pointer-events:none;filter:drop-shadow(1.5px 1.5px 1.5px rgba(0,0,0,.3))" width="1366" height="768">
 <g stroke="#f00" stroke-width="1" fill="#f00">
  <line x1="97" y1="313" x2="97" y2="340" stroke-width="1.500"/><path d="M91 336h12L97 353.7z" stroke="#c00" stroke-width=".5"/>
  <line x1="723.200" y1="318" x2="723.200" y2="345" stroke-width="1.500"/><path d="M717 341.500h12L723 359z" stroke="#c00" stroke-width=".5"/>
  <line x1="402" y1="279" x2="324" y2="353.500" stroke-width="1"/><path d="M312.900 363.400L323.200 347.600 330.800 356.200z" stroke="#c00" stroke-width=".5"/>
 </g>
</svg>
<div class="note" style="left:44px;top:284px;width:107px;height:30px;line-height:28px;padding-right:7px"><span style="transform:scaleX(.94)">Hide hobe</span></div>
<div class="note" style="left:402px;top:265px;width:189px;height:30px;line-height:27px;padding-right:2px"><span style="transform:scaleX(.972)">Req No. Column Ashbe</span></div>
<div class="note" style="left:671px;top:289px;width:105px;height:30px;line-height:28px;padding-right:5px"><span style="transform:scaleX(.94)">Hide Hobe</span></div>
<svg class="abs" style="left:0;top:0;pointer-events:none" width="1366" height="768">
 <g fill="#f00" stroke="#b00000" stroke-width=".7"><circle cx="97" cy="312.700" r="4.400"/><circle cx="723" cy="318" r="4.400"/><circle cx="402.200" cy="279" r="4.400"/></g>
</svg>
<div class="abs" style="left:1073px;top:650px;font-size:19.800px;line-height:24px;color:rgba(130,130,130,.5);white-space:nowrap">Activate Windows</div><div class="abs" style="left:1073px;top:676px;font-size:14.900px;line-height:18px;color:rgba(130,130,130,.5);white-space:nowrap">Go to Settings to activate Windows.</div><div class="abs" style="left:1336px;top:108px;width:30px;height:1px;background:#d9dcdc;z-index:5"></div>
<div id="vscroll"><svg class="abs" style="left:5px;top:8px" width="7" height="4" viewBox="0 0 7 4"><path d="M0 4L3.500 0 7 4z" fill="#a3a3a3"/></svg><div class="abs" style="left:2px;top:18px;width:13px;height:286px;background:#c1c1c1"></div><svg class="abs" style="left:5px;top:609px" width="7" height="4" viewBox="0 0 7 4"><path d="M0 0L3.500 4 7 0z" fill="#505050"/></svg></div>
<div id="footer">Copyright © 2019-23, Developed By <span>multibrand INFOTECH ltd.</span></div>
<div id="taskbar"><svg class="abs" style="left:15px;top:12px" width="18" height="17" viewBox="0 0 18 17"><path d="M0 2.400L7.300 1.400V8H0zM8.200 1.300L18 0V8H8.200zM0 8.900H7.300V15.600L0 14.600zM8.200 8.900H18V17L8.200 15.700z" fill="#fff"/></svg><svg class="abs" style="left:60px;top:8px" width="24" height="24" viewBox="0 0 24 24"><circle cx="14" cy="10" r="7.900" fill="none" stroke="#fff" stroke-width="2"/><path d="M8.500 15.500L1.500 22.500" stroke="#fff" stroke-width="2.400"/></svg><svg class="abs" style="left:111px;top:11px" width="18" height="18" viewBox="0 0 18 18"><g fill="none" stroke="#fff" stroke-width="1.200"><rect x="2.500" y="4.500" width="8" height="8"/><path d="M.5 1v2.500h12V1M.5 17v-2.500h12V17M15.500 1v3M15.500 7v6"/></g><rect x="14.500" y="5" width="2" height="2.500" fill="#fff"/></svg><svg class="abs" style="left:159px;top:9px" width="24" height="22" viewBox="0 0 24 22"><rect x="10" y="2.500" width="13" height="17" fill="#fff" stroke="#1e7145" stroke-width="1"/><g stroke="#1e7145" stroke-width="1"><path d="M14 5.500h3M18 5.500h3.500M14 8.500h3M18 8.500h3.500M14 11.500h3M18 11.500h3.500M14 14.500h3M18 14.500h3.500M14 17h3M18 17h3.500"/></g><path d="M0 2.500L14 0v22L0 19.500z" fill="#1e7145"/><path d="M3.800 6.800l2.600 4.200-2.800 4.400h2.200l1.700-3 1.700 3h2.200L8.700 11l2.600-4.200H9.200L7.600 9.600 6 6.800z" fill="#fff"/></svg><div class="abs" style="left:151px;top:38px;width:40px;height:2px;background:#f6c9b2"></div><svg class="abs" style="left:209px;top:9px" width="22" height="21" viewBox="0 0 22 21"><path d="M0 3q0-1 1-1h6.500l2 2H21q1 0 1 1v13H0z" fill="#e9a820"/><path d="M0 6h22v13q0 1-1 1H1q-1 0-1-1z" fill="#fbd45f"/><path d="M5.500 13h11v7h-3v-3.500h-5V20h-3z" fill="#2f86d6"/><path d="M5.500 13h11v1.300h-11z" fill="#56a7ec"/></svg><div class="abs" style="left:200px;top:38px;width:40px;height:2px;background:#f6c9b2"></div><svg class="abs" style="left:257px;top:8px" width="24" height="24" viewBox="-12 -12 24 24"><circle r="12" fill="#fff"/><path d="M0 0L-10.390 -6A12 12 0 0 1 10.390 -6z" fill="#ea4335"/><path d="M0 0L10.390 -6A12 12 0 0 1 0 12z" fill="#fbbc04"/><path d="M0 0L0 12A12 12 0 0 1 -10.390 -6z" fill="#34a853"/><path d="M-10.390 -6A12 12 0 0 1 10.390 -6L0 -6z" fill="#ea4335"/><path d="M10.390 -6A12 12 0 0 1 0 12L5.200 3z" fill="#fbbc04"/><path d="M0 12A12 12 0 0 1 -10.390 -6L-5.200 3z" fill="#34a853"/><path d="M0 -6H10.390L5.200 3z" fill="#fbbc04"/><path d="M-5.200 3L0 12 5.200 3z" fill="#34a853" opacity="0"/><circle r="5.600" fill="#fff"/><circle r="4.400" fill="#4285f4"/></svg><svg class="abs" style="left:305px;top:8px" width="24" height="24" viewBox="0 0 24 24"><defs><linearGradient id="np" x1=".7" y1="0" x2=".2" y2="1"><stop offset="0" stop-color="#dff3f8"/><stop offset=".5" stop-color="#8fcfe0"/><stop offset="1" stop-color="#2f93b0"/></linearGradient></defs><path d="M21.300 3.800l1.200 17.200-1.200.8z" fill="#b8892c"/><path d="M18.500 3l3 1 .2 18-3.200 1z" fill="#f2f5f6"/><path d="M9.200 1l11.500 2.500-2 19.200L1 16.800z" fill="url(#np)"/><path d="M9.200 1l11.500 2.500-.2 1.500L8.700 2.300z" fill="#c9cfd2"/><path d="M9 3l-5 13 5 2 4-14z" fill="#fff" opacity=".18"/></svg><div class="abs" style="left:298px;top:38px;width:40px;height:2px;background:#f6c9b2"></div><svg class="abs" style="left:355px;top:8px" width="24" height="24" viewBox="0 0 24 24"><rect width="24" height="24" fill="#ff3d33"/><path d="M9.500 6.500L15 12l-5.500 5.500L4 12z" fill="#fff"/><path d="M14.500 7l5 5-5 5" fill="none" stroke="#fff" stroke-width="1.700"/></svg><svg class="abs" style="left:405px;top:7px" width="23" height="24" viewBox="0 0 24 26"><defs><radialGradient id="ff1" cx=".75" cy=".15" r="1"><stop offset="0" stop-color="#fff44f"/><stop offset=".35" stop-color="#ff9a1f"/><stop offset=".7" stop-color="#ff3c4f"/><stop offset="1" stop-color="#e31587"/></radialGradient></defs><path d="M16 0c1 2 1 3.500.5 5 3 1 7 5 7 10a11.500 11.500 0 0 1-23 0c0-3 1-5.500 3-7.500 0 1 .5 2 1 2.500C5 7 7 4 9.500 3c-.5 1.500 0 3 1 4 1-3 3-5 5.500-7z" fill="url(#ff1)"/><circle cx="11.500" cy="14.500" r="5.200" fill="#7a3ff2"/><path d="M4 10c2.500-2.500 7-3 10-1-2.500-.5-4 .5-4 2 0 2.500 4 3 6 1-1 4.500-7.500 5.500-10.500 2-1.500-1.500-2-3-1.500-4z" fill="#ff9a1f"/></svg><svg class="abs" style="left:453px;top:7px" width="24" height="26" viewBox="0 0 24 26"><rect x="1" y="3" width="22" height="22" rx="3" fill="#f1f1ee" stroke="#cfcfca" stroke-width=".6"/><path d="M2.500 17C6 10 10 7 12.500 6l-3 14q-4-1-7-3z" fill="#2aa43a"/><path d="M13 4c4 4 7 10 8 17q-5 1-9.500-.5z" fill="#d6242a"/><path d="M10 4.500l4-3 .5 4z" fill="#2aa43a"/></svg><svg class="abs" style="left:503px;top:9px" width="22" height="22" viewBox="0 0 22 22"><circle cx="11" cy="11" r="10.600" fill="#0c5cf0"/><path d="M11 3.300c2.200 1.100 4.300 1.500 6.300 1.500.3 5.500-.9 10-6.300 13.200-5.400-3.200-6.600-7.700-6.300-13.200 2 0 4.100-.4 6.300-1.500z" fill="#fff"/><circle cx="8.800" cy="10" r=".9" fill="#666"/><circle cx="13.200" cy="10" r=".9" fill="#666"/><path d="M9.900 13.200h2.200" stroke="#666" stroke-width=".9"/></svg><svg class="abs" style="left:551px;top:8px" width="24" height="24" viewBox="0 0 24 24"><rect width="24" height="24" rx="10.500" fill="#0b63f0"/><path d="M6.300 6.800h11.400M17.700 6.800L6.300 17.500M6.300 17.500h11.700" fill="none" stroke="#fff" stroke-width="2.600" stroke-linecap="round" stroke-linejoin="round"/></svg><div class="abs" style="left:588px;top:0;width:48px;height:40px;background:#525858"></div><svg class="abs" style="left:599.5px;top:8px" width="24" height="24" viewBox="-12 -12 24 24"><circle r="12" fill="#fff"/><path d="M0 0L-10.390 -6A12 12 0 0 1 10.390 -6z" fill="#ea4335"/><path d="M0 0L10.390 -6A12 12 0 0 1 0 12z" fill="#fbbc04"/><path d="M0 0L0 12A12 12 0 0 1 -10.390 -6z" fill="#34a853"/><path d="M-10.390 -6A12 12 0 0 1 10.390 -6L0 -6z" fill="#ea4335"/><path d="M10.390 -6A12 12 0 0 1 0 12L5.200 3z" fill="#fbbc04"/><path d="M0 12A12 12 0 0 1 -10.390 -6L-5.200 3z" fill="#34a853"/><path d="M0 -6H10.390L5.200 3z" fill="#fbbc04"/><path d="M-5.200 3L0 12 5.200 3z" fill="#34a853" opacity="0"/><circle r="5.600" fill="#fff"/><circle r="4.400" fill="#4285f4"/></svg><div class="abs" style="left:587px;top:38px;width:49px;height:2px;background:#f6c9b2"></div><svg class="abs" style="left:649px;top:8px" width="24" height="24" viewBox="0 0 24 24"><rect width="24" height="24" fill="#3f88c9"/><path d="M23 3.500C17 .5 3.500 0 2.500 7.500c-.8 6 12 6.500 11.500 10-.4 2.500-7 2-13-1.500V24h15.500c4 0 7-2.500 7-6.500 0-7-12.500-7-12.500-10.500 0-2 5.500-2.500 12 .5z" fill="#fff"/></svg><div class="abs" style="left:641px;top:38px;width:32px;height:2px;background:#f6c9b2"></div><div class="abs" style="left:673px;top:38px;width:8px;height:2px;background:#c9a090"></div><svg class="abs" style="left:1011px;top:8px" width="26" height="24" viewBox="0 0 26 24"><defs><linearGradient id="sun" x1="0" y1="0" x2="0" y2="1"><stop offset="0" stop-color="#ffd23b"/><stop offset="1" stop-color="#f26a1b"/></linearGradient></defs><circle cx="13" cy="12" r="11" fill="url(#sun)"/><g stroke="#ffe9a8" stroke-width="1.600"><path d="M9 7h16M3 10.500h18M6 14h19M1 17.500h17"/></g></svg><div class="abs" style="left:1044px;top:10px;font-size:14px;line-height:20px;color:#fff;white-space:pre;letter-spacing:-0.450px">91°F</div><div class="abs" style="left:1081px;top:10px;font-size:14px;line-height:20px;color:#fff;white-space:pre;letter-spacing:-0.300px">Haze</div><svg class="abs" style="left:1134px;top:15px" width="14" height="9" viewBox="0 0 14 9"><path d="M1 8l6-6.500L13 8" fill="none" stroke="#fff" stroke-width="1.400"/></svg><svg class="abs" style="left:1158px;top:11px" width="14" height="18" viewBox="0 0 14 18"><g fill="none" stroke="#fff" stroke-width="1"><rect x="1.500" y="4.500" width="7" height="9" rx="2"/><path d="M8.500 8l3.500-1.500v5L8.500 10M2.500 2.500q2.500-2 5 0M2.500 15.500q2.500 2 5 0"/></g></svg><svg class="abs" style="left:1180px;top:14px" width="19" height="12" viewBox="0 0 19 12"><path d="M4 12a4 4 0 0 1 0-7.500A5.500 5.500 0 0 1 14 4a4 4 0 0 1 1.500 8z" fill="#e9e9e9"/><path d="M8 12a3.500 3.500 0 0 1 2-6 4.500 4.500 0 0 1 8 2.500c1 .5 1 3.500-1 3.500z" fill="#fff"/></svg><svg class="abs" style="left:1203px;top:13px" width="19" height="14" viewBox="0 0 19 14"><rect x="6" y="4" width="11.500" height="7.500" fill="#fff" stroke="#fff" stroke-width="1"/><rect x="7.500" y="5.500" width="8.500" height="4.500" fill="#888"/><rect x="17.500" y="6" width="1.500" height="3.500" fill="#fff"/><path d="M3 1v3M6 1v3M1.500 4h6v2q0 2.500-3 2.500t-3-2.500zM4.500 8.500V13" stroke="#fff" stroke-width="1.200" fill="none"/></svg><svg class="abs" style="left:1227px;top:12px" width="19" height="16" viewBox="0 0 19 16"><path d="M1 5.500h3.500L9 1.500v13L4.500 10.500H1z" fill="none" stroke="#fff" stroke-width="1.200"/><path d="M11.500 5.500q1.500 2.500 0 5M14 3.500q2.500 4.500 0 9" fill="none" stroke="#fff" stroke-width="1.100"/><path d="M16.500 2q3 6 0 12" fill="none" stroke="#888" stroke-width="1"/></svg><div class="abs" style="left:1246px;top:3px;width:70px;text-align:center;font-size:12px;line-height:16px;color:#fff;letter-spacing:-0.380px">3:39 PM</div><div class="abs" style="left:1246px;top:21px;width:70px;text-align:center;font-size:12px;line-height:16px;color:#fff;letter-spacing:-0.300px">10/2/2023</div><svg class="abs" style="left:1324px;top:11px" width="26" height="26" viewBox="0 0 26 26"><path d="M1 1h16v13.500h-1.500L12 11.500H1z" fill="#fff"/><path d="M4 4h10M4 6.700h10M4 9.300h7" stroke="#3b3b3b" stroke-width="1"/><circle cx="16.500" cy="16.700" r="7.600" fill="#3a3a3a" stroke="#d0d0d0" stroke-width=".8"/><text x="16.500" y="20.700" font-family="Liberation Sans" font-size="11" font-weight="bold" fill="#fff" text-anchor="middle">2</text></svg><div class="abs" style="left:1361px;top:0;width:1px;height:40px;background:#8a8a8a"></div></div>
</body>
</html>
